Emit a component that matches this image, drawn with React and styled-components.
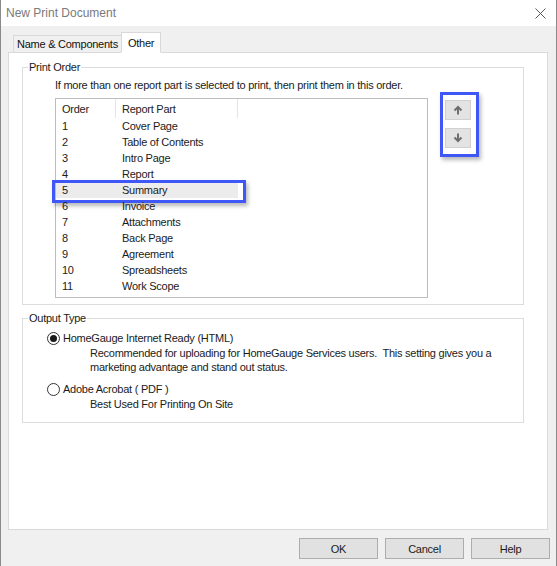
import React from 'react'
import styled, { createGlobalStyle } from 'styled-components'

const GlobalStyle = createGlobalStyle`
  html, body {
    margin: 0;
    padding: 0;
    background: #f0f0f0;
  }
  body {
    font-family: 'Liberation Sans', Arial, sans-serif;
    font-size: 11px;
    letter-spacing: -0.25px;
    color: #1b1b1b;
  }
`

const parts = [
  'Cover Page',
  'Table of Contents',
  'Intro Page',
  'Report',
  'Summary',
  'Invoice',
  'Attachments',
  'Back Page',
  'Agreement',
  'Spreadsheets',
  'Work Scope',
]

const Dialog = styled.div`
  box-sizing: border-box;
  width: 557px;
  height: 566px;
  display: flex;
  flex-direction: column;
  background: #f0f0f0;
  border-left: 1px solid #8a8a8a;
  border-right: 1px solid #8a8a8a;
`

const TitleBar = styled.div`
  height: 26px;
  flex: none;
  display: flex;
  align-items: center;
  justify-content: space-between;
  padding: 0 10px 0 5px;
  background: #fff;
  font-size: 12px;
  letter-spacing: 0;
  color: #7a7a7a;
`

const Body = styled.div`
  padding: 6px 8px 0 7px;
  display: flex;
  flex-direction: column;
`

const TabStrip = styled.div`
  display: flex;
  align-items: flex-end;
  padding-left: 5px;
  position: relative;
  z-index: 1;
  margin-bottom: -1px;
`

const Tab = styled.div`
  box-sizing: border-box;
  height: ${(p) => (p.$active ? '21px' : '18px')};
  padding: 0 ${(p) => (p.$active ? '6px' : '3px')};
  margin-left: ${(p) => (p.$active ? '-1px' : '0')};
  display: flex;
  align-items: center;
  background: ${(p) => (p.$active ? '#fff' : '#f0f0f0')};
  border: 1px solid #d9d9d9;
  border-bottom: ${(p) => (p.$active ? '1px solid #fff' : '1px solid #d9d9d9')};
  color: #111;
`

const Panel = styled.div`
  box-sizing: border-box;
  width: 540px;
  height: 478px;
  background: #fff;
  border: 1px solid #d9d9d9;
  padding: 8px 23px 0 13px;
`

const Group = styled.fieldset`
  margin: ${(p) => p.$gap || '0'} 0 0 0;
  padding: ${(p) => p.$pad};
  border: 1px solid #dcdcdc;
  min-width: 0;
`

const Legend = styled.legend`
  padding: 0 1px;
  margin-left: ${(p) => p.$shift};
  line-height: 13px;
  color: #1b1b1b;
`

const Note = styled.div`
  line-height: 13px;
`

const OrderRow = styled.div`
  display: flex;
  align-items: flex-start;
  margin-top: 6px;
`

const ListBox = styled.div`
  box-sizing: border-box;
  width: 373px;
  height: 200px;
  border: 1px solid #bdbdbd;
  background: #fff;
`

const Columns = styled.div`
  display: grid;
  grid-template-columns: 60px 122px 1fr;
  height: ${(p) => (p.$header ? '19px' : '16px')};
  align-items: center;
  position: relative;
`

const Cell = styled.div`
  height: 100%;
  display: flex;
  align-items: center;
  padding-left: 6px;
  border-right: ${(p) => (p.$divider ? '1px solid #e5e5e5' : 'none')};
  background: ${(p) => (p.$selected ? '#ececec' : 'transparent')};
  color: ${(p) => (p.$header ? '#222' : '#1b1b1b')};
`

const Highlight = styled.div`
  position: absolute;
  left: -4px;
  top: -2px;
  width: 194px;
  height: 23px;
  box-sizing: border-box;
  border: 3px solid #3f57f7;
  box-shadow: 2px 3px 4px rgba(0, 0, 0, 0.28);
  pointer-events: none;
`

const MoveStack = styled.div`
  position: relative;
  margin: 2px 0 0 17px;
  display: flex;
  flex-direction: column;
  gap: 8px;
`

const StackHighlight = styled.div`
  position: absolute;
  left: -5px;
  top: -8px;
  width: 39px;
  height: 65px;
  box-sizing: border-box;
  border: 3px solid #3f57f7;
  box-shadow: 2px 3px 4px rgba(0, 0, 0, 0.28);
  pointer-events: none;
`

const MoveButton = styled.button`
  box-sizing: border-box;
  width: 26px;
  height: 20px;
  padding: 0;
  display: flex;
  align-items: center;
  justify-content: center;
  background: #e3e3e3;
  border: 1px solid #d0d0d0;
`

const Option = styled.div`
  display: flex;
  align-items: center;
  gap: 3px;
  line-height: 13px;
  margin-top: ${(p) => p.$gap || '0'};
`

const Radio = styled.span`
  box-sizing: border-box;
  width: 13px;
  height: 13px;
  border-radius: 50%;
  border: 1px solid #333;
  background: #fff;
  display: flex;
  align-items: center;
  justify-content: center;
  &::after {
    content: '';
    width: 7px;
    height: 7px;
    border-radius: 50%;
    background: ${(p) => (p.$checked ? '#1a1a1a' : 'transparent')};
  }
`

const Description = styled.div`
  margin: 2px 0 0 43px;
  line-height: 13.5px;
  white-space: pre-wrap;
`

const Footer = styled.div`
  display: flex;
  justify-content: flex-end;
  gap: 7px;
  padding-top: 8px;
  margin-right: -2px;
`

const DialogButton = styled.button`
  box-sizing: border-box;
  width: 79px;
  height: 21px;
  padding: 0;
  background: #e1e1e1;
  border: 1px solid #adadad;
  font-family: 'Liberation Sans', Arial, sans-serif;
  font-size: 11px;
  letter-spacing: -0.25px;
  color: #1b1b1b;
`

const Arrow = ({ down }) => (
  <svg width="10" height="10" viewBox="0 0 10 10">
    <g transform={down ? 'rotate(180 5 5)' : undefined} fill="none" stroke="#6e6e6e" strokeWidth="2">
      <path d="M5 9.5V2" />
      <path d="M1.5 5.5L5 2l3.5 3.5" />
    </g>
  </svg>
)

const CloseIcon = () => (
  <svg width="11" height="11" viewBox="0 0 11 11">
    <path d="M0.5 0.5l10 10M10.5 0.5l-10 10" stroke="#5a5a5a" strokeWidth="1" />
  </svg>
)

const App = () => {
  return (
    <>
      <GlobalStyle />
      <Dialog>
        <TitleBar>
          <span>New Print Document</span>
          <CloseIcon />
        </TitleBar>
        <Body>
          <TabStrip>
            <Tab>Name &amp; Components</Tab>
            <Tab $active>Other</Tab>
          </TabStrip>
          <Panel>
            <Group $pad="5px 0 6px 32px">
              <Legend $shift="-27px">Print Order</Legend>
              <Note>If more than one report part is selected to print, then print them in this order.</Note>
              <OrderRow>
                <ListBox>
                  <Columns $header>
                    <Cell $header $divider>Order</Cell>
                    <Cell $header $divider>Report Part</Cell>
                    <Cell />
                  </Columns>
                  {parts.map((p, i) => {
                    const selected = p === 'Summary'
                    return (
                      <Columns key={p}>
                        <Cell $selected={selected}>{i + 1}</Cell>
                        <Cell $selected={selected}>{p}</Cell>
                        <Cell />
                        {selected ? <Highlight /> : null}
                      </Columns>
                    )
                  })}
                </ListBox>
                <MoveStack>
                  <StackHighlight />
                  <MoveButton type="button">
                    <Arrow />
                  </MoveButton>
                  <MoveButton type="button">
                    <Arrow down />
                  </MoveButton>
                </MoveStack>
              </OrderRow>
            </Group>

            <Group $gap="7px" $pad="7px 0 10px 24px">
              <Legend $shift="-19px">Output Type</Legend>
              <Option>
                <Radio $checked />
                HomeGauge Internet Ready (HTML)
              </Option>
              <Description>
                {'Recommended for uploading for HomeGauge Services users.  This setting gives you a\nmarketing advantage and stand out status.'}
              </Description>
              <Option $gap="9px">
                <Radio />
                Adobe Acrobat ( PDF )
              </Option>
              <Description>Best Used For Printing On Site</Description>
            </Group>
          </Panel>
          <Footer>
            <DialogButton type="button">OK</DialogButton>
            <DialogButton type="button">Cancel</DialogButton>
            <DialogButton type="button">Help</DialogButton>
          </Footer>
        </Body>
      </Dialog>
    </>
  )
}

export default App
